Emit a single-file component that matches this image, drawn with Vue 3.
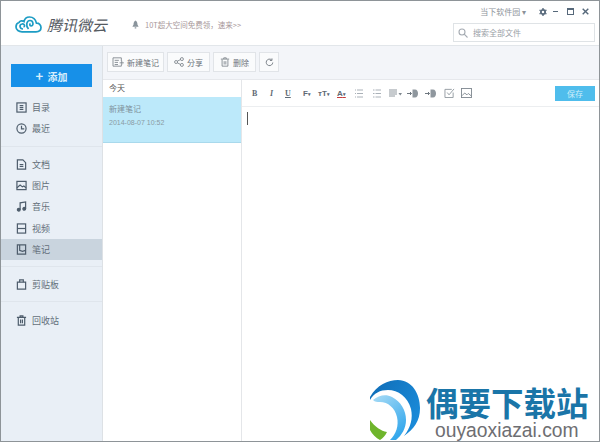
<script setup>
const groups = [
  [
    { name: '目录', icon: 'list' },
    { name: '最近', icon: 'clock' }
  ],
  [
    { name: '文档', icon: 'doc' },
    { name: '图片', icon: 'pic' },
    { name: '音乐', icon: 'music' },
    { name: '视频', icon: 'video' },
    { name: '笔记', icon: 'note', active: true }
  ],
  [{ name: '剪贴板', icon: 'clip' }],
  [{ name: '回收站', icon: 'trash' }]
]
</script>

<template>
  <div class="window">
    <header class="topbar">
      <div class="logo">
        <svg width="27" height="17" viewBox="0 0 27 17" fill="none" stroke="#1d9cc4" stroke-width="1.700">
          <path d="M7 15.800 H21 C24 15.800 26 14 26 11.500 C26 9 24 7 21.500 7.200 C20.500 3 17.500 1 14.500 1 C11.500 1 9.500 3 9 5.500 C7.500 4.500 5 4.500 4 6.500 C2 7 1 9 1 11 C1 14 4 15.800 7 15.800 Z" />
          <path d="M8 13 C4.500 13 4 8.500 7 8 C9.500 7.500 10.500 10.500 8.500 11" />
          <path d="M13.500 13 C10.500 10 11.500 4.500 15 4.500 C18.500 4.500 19 10 16 10 C14.500 10 14.500 8 15.500 7.500" />
        </svg>
        <span class="logo-text">腾讯微云</span>
      </div>
      <div class="notice">
        <svg width="7" height="9" viewBox="0 0 9 10"><path d="M4.500 0 C6.500 1 7 3 7 5 L8.500 8 H0.500 L2 5 C2 3 2.500 1 4.500 0 Z M3.500 8.500 H5.500 V10 H3.500 Z" fill="#8a949c" /></svg>
        <span>10T超大空间免费领，速来&gt;&gt;</span>
      </div>
      <div class="top-right">
        <div class="win-row">
          <span class="soft">当下软件园 ▾</span>
          <svg class="gear" width="8" height="8" viewBox="0 0 12 12"><circle cx="6" cy="6" r="3.200" fill="none" stroke="#56687a" stroke-width="2.600" /><path d="M6 0 V2 M6 10 V12 M0.800 3 L2.500 4 M9.500 8 L11.200 9 M0.800 9 L2.500 8 M9.500 4 L11.200 3" stroke="#56687a" stroke-width="2" /></svg>
          <span class="win-min"></span>
          <span class="win-max"></span>
          <svg width="7" height="7" viewBox="0 0 10 10"><path d="M1 1 L9 9 M9 1 L1 9" stroke="#56687a" stroke-width="2" /></svg>
        </div>
        <div class="search">
          <svg width="10" height="10" viewBox="0 0 10 10" fill="none" stroke="#a5abb2" stroke-width="1.100"><circle cx="4" cy="4" r="3" /><path d="M6.200 6.200 L9.500 9.500" /></svg>
          <span>搜索全部文件</span>
        </div>
      </div>
    </header>

    <div class="main">
      <aside class="sidebar">
        <button class="add"><span class="plus">+</span> 添加</button>
        <div v-for="(group, i) in groups" :key="i" class="group">
          <div v-for="item in group" :key="item.name" :class="['nav-item', { active: item.active }]">
            <svg class="nav-icon" width="11" height="11" viewBox="0 0 12 12" fill="none" stroke="#4d5c6b" stroke-width="1.300">
              <template v-if="item.icon === 'list'">
                <rect x="1" y="1" width="10" height="10" />
                <path d="M4 4 H8 M4 6 H8 M4 8 H8" />
              </template>
              <template v-else-if="item.icon === 'clock'">
                <circle cx="6" cy="6" r="5" />
                <path d="M6 3 V6.500 H9" />
              </template>
              <template v-else-if="item.icon === 'doc'">
                <path d="M1.500 1 H7.500 L10.500 4 V11 H1.500 Z" />
                <path d="M4 6 H8 M4 8 H8" />
              </template>
              <template v-else-if="item.icon === 'pic'">
                <rect x="1" y="1.500" width="10" height="9" />
                <path d="M1 8.500 L4.500 5.500 L7 7.500 L8.500 6.500 L11 8.500" />
              </template>
              <template v-else-if="item.icon === 'music'">
                <path d="M4.500 9.500 V2 L10.500 1 V8.500" />
                <circle cx="3" cy="9.500" r="1.500" fill="#4d5c6b" />
                <circle cx="9" cy="8.500" r="1.500" fill="#4d5c6b" />
              </template>
              <template v-else-if="item.icon === 'video'">
                <rect x="1.500" y="1" width="9" height="10" />
                <path d="M1.500 6 H10.500" />
              </template>
              <template v-else-if="item.icon === 'note'">
                <path d="M1.500 1 H10.500 V11 H1.500 Z" />
                <path d="M4 1 V7 L7 8 L10.500 7" />
              </template>
              <template v-else-if="item.icon === 'clip'">
                <path d="M1.500 3.500 H10.500 V11 H1.500 Z" />
                <path d="M4 3.500 V1 H8 V3.500" />
              </template>
              <template v-else>
                <path d="M2.500 3 V11 H9.500 V3 M1 2.500 H11 M4.500 2.500 V1 H7.500 V2.500 M5 5 V9 M7 5 V9" />
              </template>
            </svg>
            <span>{{ item.name }}</span>
          </div>
        </div>
      </aside>

      <section class="content">
        <div class="actions">
          <button class="act w-new">
            <svg width="12" height="10" viewBox="0 0 14 12" fill="none" stroke="#7a8188"><path d="M11 5 V1 H1 V11 H11 V9 M3 4 H8 M3 6.500 H7 M3 9 H7 M9 7 H14 M11.500 4.500 V9.500" /></svg>
            新建笔记
          </button>
          <button class="act w-sm">
            <svg width="10" height="10" viewBox="0 0 12 12" fill="none" stroke="#7a8188"><circle cx="2.500" cy="6" r="1.800" /><circle cx="9.500" cy="2.500" r="1.800" /><circle cx="9.500" cy="9.500" r="1.800" /><path d="M4 5 L8 3 M4 7 L8 9" /></svg>
            分享
          </button>
          <button class="act w-sm">
            <svg width="10" height="10" viewBox="0 0 12 12" fill="none" stroke="#7a8188"><path d="M2.500 3 V11 H9.500 V3 M1 2.500 H11 M4.500 2.500 V1 H7.500 V2.500 M5 5 V9 M7 5 V9" /></svg>
            删除
          </button>
          <button class="act w-ref">
            <svg width="9" height="9" viewBox="0 0 11 11" fill="none" stroke="#7a8188" stroke-width="1.200"><path d="M9.500 5.500 A4 4 0 1 1 8 2.200" /><path d="M8.500 0.500 V3 H6" /></svg>
          </button>
        </div>

        <div class="panes">
          <div class="note-list">
            <div class="day">今天</div>
            <div class="note-card">
              <div class="note-title">新建笔记</div>
              <div class="note-time">2014-08-07 10:52</div>
            </div>
          </div>

          <div class="editor">
            <div class="toolbar">
              <span class="tool b">B</span>
              <span class="tool i">I</span>
              <span class="tool u">U</span>
              <span class="tool s f">F<small>▾</small></span>
              <span class="tool s t">тT<small>▾</small></span>
              <span class="tool s a">A<small>▾</small></span>
              <svg class="glyph g-list" width="8" height="9" viewBox="0 0 8 9" stroke="#aab1b8"><path d="M2 1 H8 M2 4.500 H8 M2 8 H8 M0 1 H1 M0 4.500 H1 M0 8 H1" /></svg>
              <svg class="glyph g-list2" width="8" height="9" viewBox="0 0 8 9" stroke="#aab1b8"><path d="M2.500 1 H8 M2.500 4.500 H8 M2.500 8 H8 M0 1 H1.500 M0 4.500 H1.500 M0 8 H1.500" /></svg>
              <svg class="glyph g-align" width="13" height="9" viewBox="0 0 13 9" stroke="#8f979e"><path d="M0 1 H8 M0 3 H8 M0 5 H8 M0 7 H6" /><path d="M9.500 4 H13 L11.250 6.500 Z" fill="#7f8890" stroke="none" /></svg>
              <svg class="glyph g-ind" width="11" height="9" viewBox="0 0 11 9"><path d="M5.500 0.500 H8 C10 0.500 11 2.500 11 4.500 C11 6.500 10 8.500 8 8.500 H5.500 Z" fill="#8f979e" /><path d="M0 4.500 H4.500 M3 3 L4.500 4.500 L3 6" stroke="#6f7880" fill="none" /></svg>
              <svg class="glyph g-out" width="11" height="9" viewBox="0 0 11 9"><path d="M5.500 0.500 H8 C10 0.500 11 2.500 11 4.500 C11 6.500 10 8.500 8 8.500 H5.500 Z" fill="#8f979e" /><path d="M0 4.500 H4.500 M3 3 L4.500 4.500 L3 6" stroke="#6f7880" fill="none" /></svg>
              <svg class="glyph g-check" width="11" height="10" viewBox="0 0 11 11" fill="none" stroke="#8f979e"><path d="M9.500 5 V10.500 H0.500 V1.500 H8" /><path d="M3 5 L5 7.500 L10.500 1" /></svg>
              <svg class="glyph" width="11" height="10" viewBox="0 0 12 11" fill="none" stroke="#7f8890"><rect x="0.500" y="0.500" width="11" height="10" /><path d="M1 8.500 L4 5.500 L6.500 7.500 L8 6 L11 8.500" /></svg>
              <button class="save">保存</button>
            </div>
            <div class="body"><span class="caret"></span></div>
          </div>
        </div>
      </section>
    </div>

    <div class="watermark">
      <svg width="52" height="61" viewBox="0 0 52 61">
        <defs>
          <linearGradient id="arcDark" x1="0" y1="0" x2="1" y2="0.600">
            <stop offset="0" stop-color="#0f6cb6" />
            <stop offset="1" stop-color="#1a8ad8" />
          </linearGradient>
          <linearGradient id="arcLight" x1="0" y1="0" x2="0.600" y2="1">
            <stop offset="0" stop-color="#a9dcf6" />
            <stop offset="1" stop-color="#35a8ec" />
          </linearGradient>
        </defs>
        <path d="M0 17 C7 5 18 0 28 0 C42 0 50 14 50 28 C50 41 44 49 34 56 C41 47 43 38 41 29 C38 17 28 10 18 10 C10 10 4 13 0 20 Z" fill="url(#arcDark)" />
        <path d="M3 20 C9 15 16 14 22 17 C31 22 36 30 36 40 C36 48 32 55 26 60 L20 60 C26 54 29 46 27 37 C25 28 18 22 10 22 C7 22 5 22 3 20 Z" fill="url(#arcLight)" />
        <path d="M0 40 C5 47 11 51 17 52 C15 56 13 58 10 60 C6 58 2 54 0 50 Z" fill="#6fb52c" />
      </svg>
      <div class="wm-text">
        <div class="wm-cn">偶要下载站</div>
        <div class="wm-en">ouyaoxiazai.com</div>
      </div>
    </div>
  </div>
</template>

<style scoped>
.window {
  position: relative;
  width: 600px;
  height: 442px;
  box-sizing: border-box;
  border: 1px solid #8e9498;
  background: #fff;
  font-family: "Noto Sans CJK SC", "Liberation Sans", sans-serif;
  color: #5a6670;
  overflow: hidden;
}

.topbar {
  display: flex;
  height: 45px;
  border-bottom: 1px solid #e2e6ea;
  box-sizing: border-box;
}

.logo {
  display: flex;
  align-items: center;
  gap: 5px;
  margin-left: 14px;
  padding-top: 3px;
  width: 117px;
}

.logo-text {
  font-size: 15px;
  font-style: italic;
  color: #54595f;
  white-space: nowrap;
}

.notice {
  display: flex;
  align-items: center;
  gap: 6px;
  padding-top: 3px;
  font-size: 7.500px;
  color: #a8989a;
}

.top-right {
  margin-left: auto;
  width: 142px;
  margin-right: 4px;
}

.win-row {
  display: flex;
  align-items: center;
  justify-content: flex-end;
  height: 21px;
  padding-right: 6px;
}

.soft {
  font-size: 8px;
  color: #8c9299;
  margin-right: 13px;
  white-space: nowrap;
}

.gear {
  margin-right: 6px;
}

.win-min {
  width: 5px;
  height: 1px;
  background: #56687a;
  margin-right: 9px;
}

.win-max {
  width: 5px;
  height: 4px;
  border: 1px solid #56687a;
  border-top-width: 2px;
  margin-right: 8px;
}

.search {
  display: flex;
  align-items: center;
  gap: 5px;
  height: 19px;
  margin-top: 1px;
  padding-left: 4px;
  box-sizing: border-box;
  border: 1px solid #dfe3e6;
  font-size: 8px;
  color: #9aa0a6;
}

.main {
  display: flex;
  height: 395px;
}

.sidebar {
  width: 101px;
  flex: none;
  background: #e9eff6;
  border-right: 1px solid #dde1e5;
  padding-top: 18px;
}

.add {
  display: block;
  width: 81px;
  height: 23px;
  margin: 0 0 7px 10px;
  border: none;
  background: #1790e8;
  color: #d8eefc;
  font-family: inherit;
  font-size: 10px;
  font-weight: 700;
}

.plus {
  font-size: 13px;
  margin-right: 2px;
}

.group {
  padding: 3px 0 6px;
  border-bottom: 1px solid #dfe5ec;
  margin-bottom: 4px;
}

.group:last-child {
  border-bottom: none;
}

.nav-item {
  display: flex;
  align-items: center;
  gap: 5px;
  height: 21.300px;
  padding-left: 15px;
  font-size: 9px;
  color: #646f7a;
}

.nav-item.active {
  background: #c9d4de;
}

.nav-icon {
  flex: none;
}

.content {
  flex: 1;
  display: flex;
  flex-direction: column;
  min-width: 0;
}

.actions {
  display: flex;
  gap: 3px;
  flex: none;
  height: 34px;
  padding: 6px 0 0 4px;
  box-sizing: border-box;
  background: #f3f5f9;
  border-bottom: 1px solid #e6e8ec;
}

.act {
  display: flex;
  align-items: center;
  justify-content: center;
  gap: 3px;
  height: 20px;
  padding: 0;
  border: 1px solid #e1e4e8;
  background: #fafbfc;
  font-family: inherit;
  font-size: 8px;
  color: #6d747b;
}

.w-new {
  width: 57px;
}

.w-sm {
  width: 43px;
}

.w-ref {
  width: 20px;
}

.panes {
  flex: 1;
  display: flex;
}

.note-list {
  width: 139px;
  flex: none;
  border-right: 1px solid #e4e6e9;
  box-sizing: border-box;
}

.day {
  height: 17px;
  line-height: 15px;
  padding-left: 6px;
  font-size: 8px;
  color: #555;
}

.note-card {
  height: 46px;
  padding: 6px 0 0 6px;
  box-sizing: border-box;
  background: #bce9fa;
  border-bottom: 1px solid #a9d9ec;
}

.note-title {
  font-size: 8px;
  color: #7f929c;
  line-height: 12px;
}

.note-time {
  font-size: 7px;
  color: #8a9ba4;
  margin-top: 4px;
  font-family: "Liberation Sans", sans-serif;
}

.editor {
  flex: 1;
  min-width: 0;
}

.toolbar {
  display: flex;
  align-items: center;
  height: 27px;
  padding-left: 10px;
  border-bottom: 1px solid #eceef0;
  box-sizing: border-box;
}

.tool {
  width: 18px;
  flex: none;
  font-family: "Liberation Serif", serif;
  font-size: 8px;
  font-weight: 700;
  color: #5f6a74;
  white-space: nowrap;
}

.tool small {
  font-size: 5px;
}

.tool.i {
  width: 15px;
  font-style: italic;
}

.tool.u {
  text-decoration: underline;
}

.tool.s {
  font-family: "Liberation Sans", sans-serif;
}

.tool.f {
  width: 15px;
}

.tool.t {
  width: 19px;
}

.tool.a {
  text-decoration: underline;
  text-decoration-color: #c63c3c;
}

.glyph {
  margin-right: 6px;
  flex: none;
}

.g-list {
  margin-right: 10px;
}

.g-list2 {
  margin-right: 8px;
}

.g-align {
  margin-right: 5px;
}

.g-ind {
  margin-right: 7px;
}

.g-out {
  margin-right: 8px;
}

.g-check {
  margin-right: 6px;
}

.save {
  width: 40px;
  height: 15px;
  margin-left: auto;
  margin-right: 4px;
  padding: 0;
  border: none;
  background: #4fbdec;
  color: #cdeefa;
  font-family: inherit;
  font-size: 8px;
}

.body {
  padding: 5px 0 0 5px;
}

.caret {
  display: block;
  width: 1px;
  height: 13px;
  background: #555;
}

.watermark {
  position: absolute;
  left: 369px;
  bottom: 0;
  display: flex;
  align-items: flex-end;
}

.wm-text {
  margin-left: 4px;
}

.wm-cn {
  font-size: 32.500px;
  line-height: 33px;
  font-weight: 700;
  color: #1a75a8;
  white-space: nowrap;
}

.wm-en {
  margin: 3px 0 0 9px;
  font-family: "Liberation Sans", sans-serif;
  font-size: 19.300px;
  line-height: 20px;
  color: #6e6e72;
}
</style>

<style>
html, body {
  margin: 0;
  background: #fff;
}
</style>
